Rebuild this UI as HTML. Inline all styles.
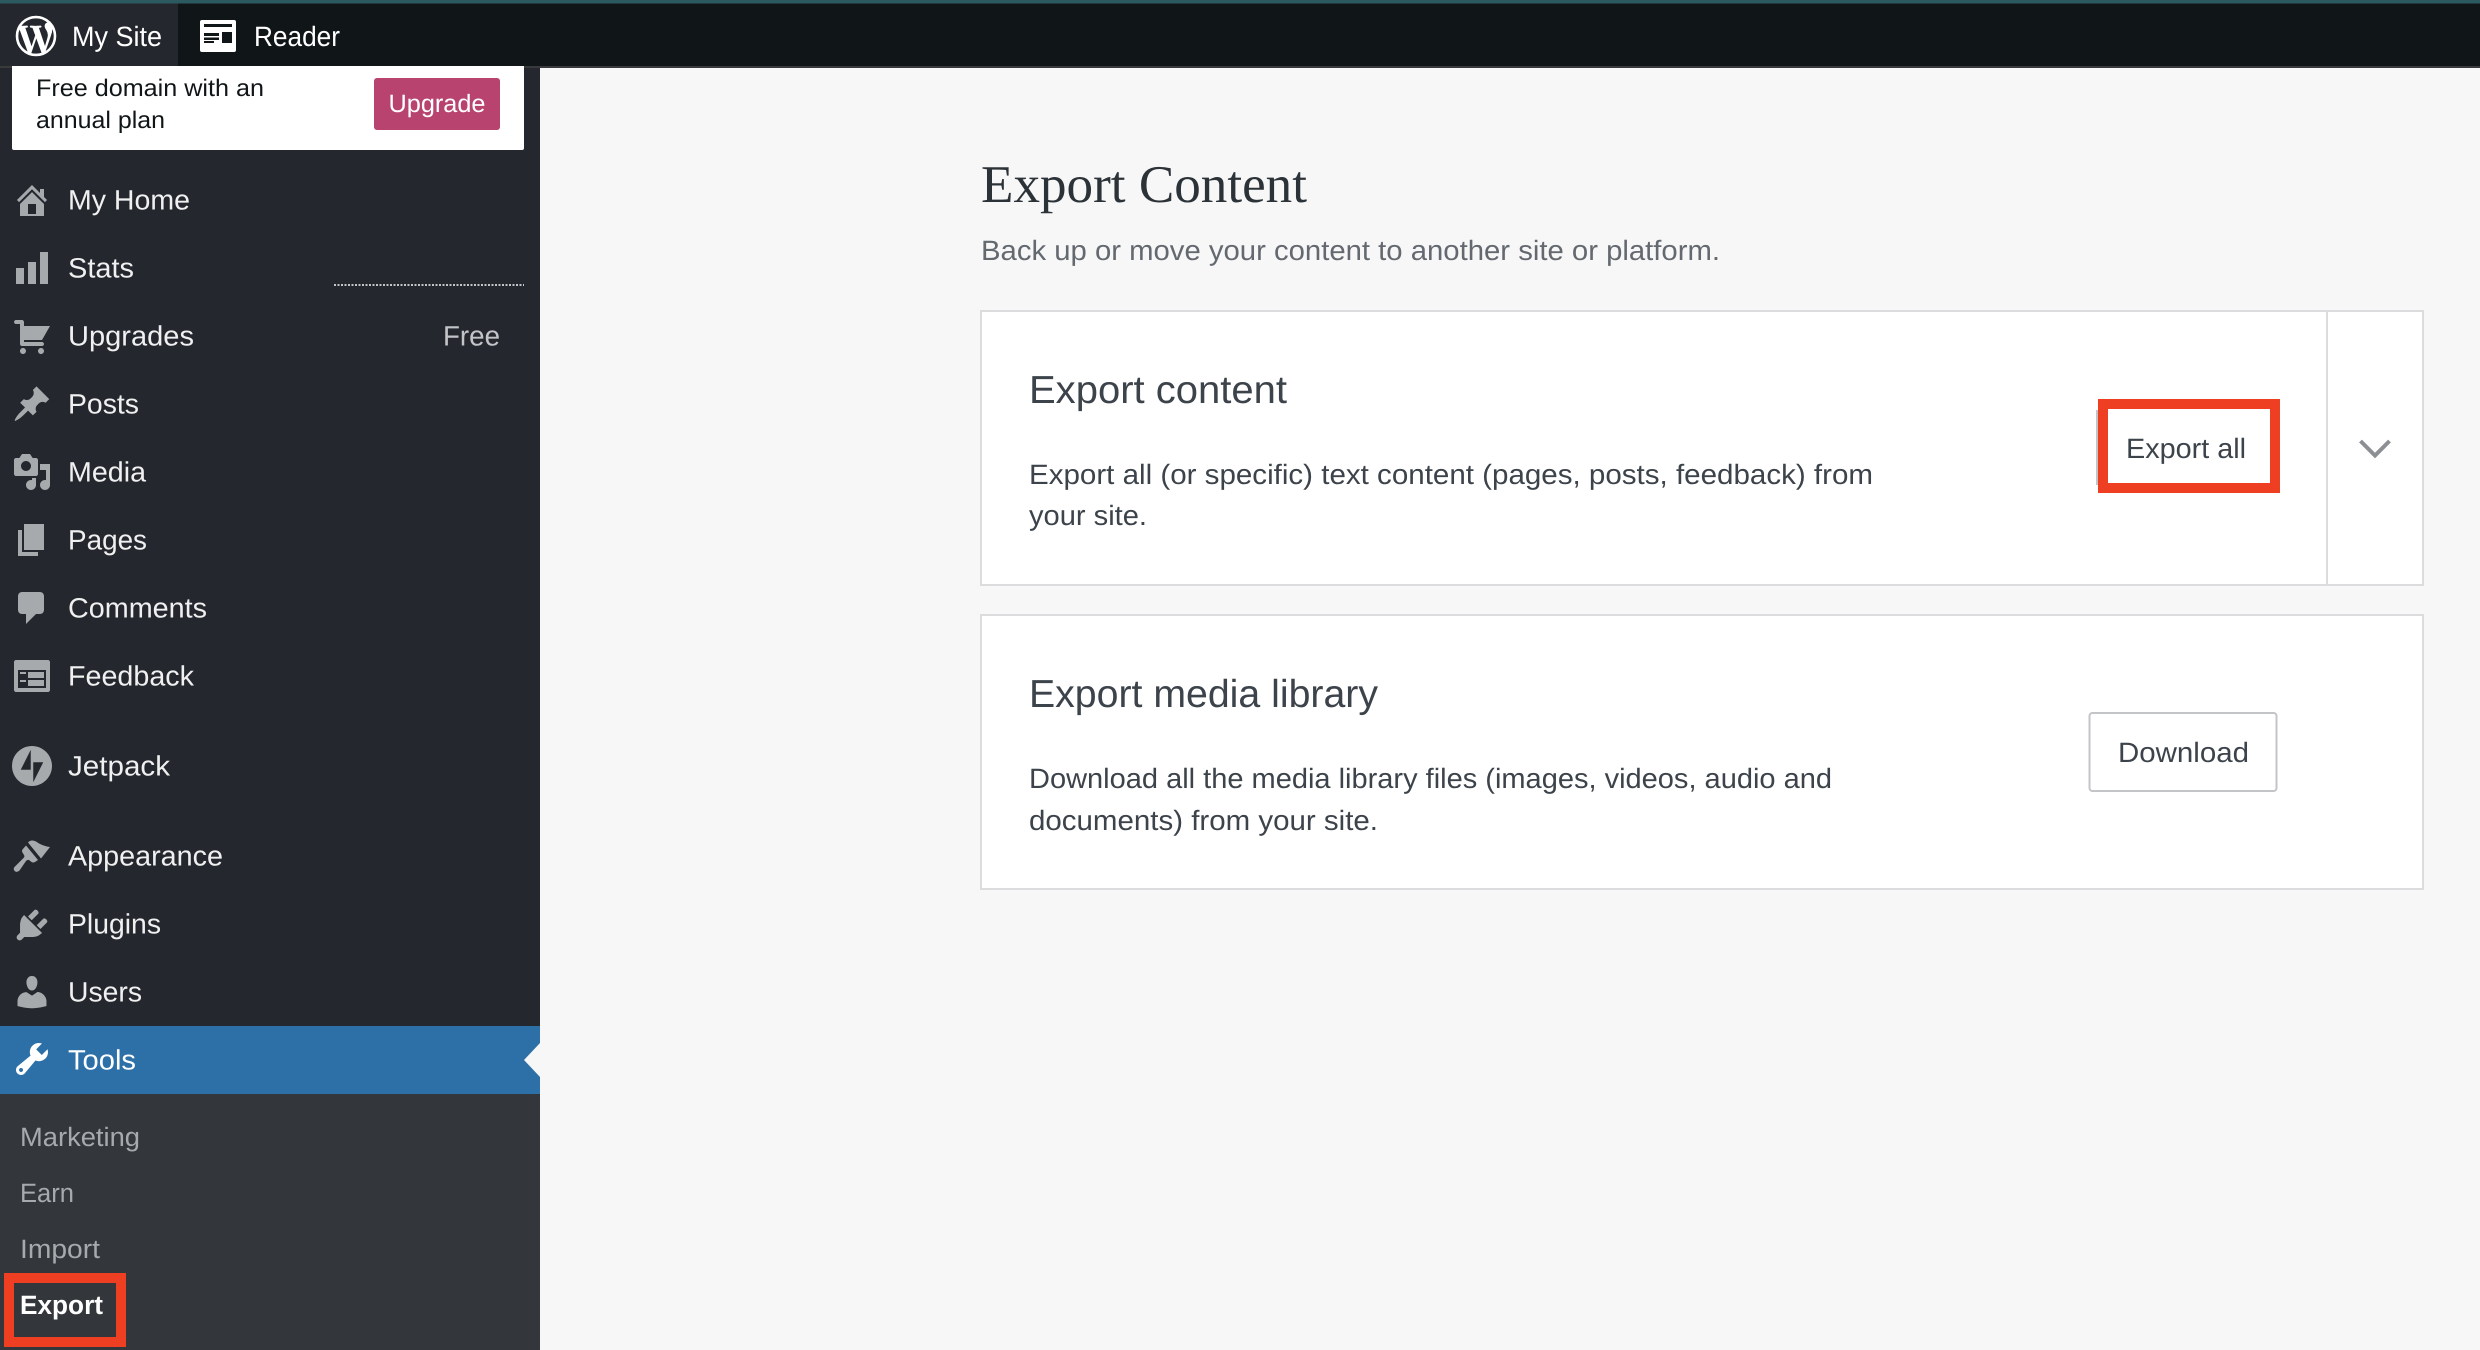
<!DOCTYPE html>
<html><head><meta charset="utf-8"><title>Export Content</title>
<style>
html,body{margin:0;padding:0;background:#f7f7f7;width:2480px;height:1350px;overflow:hidden}
svg{display:block}
text{font-family:"Liberation Sans",sans-serif;text-rendering:geometricPrecision}
.m{font-size:28px;fill:#f0f0f1}
.s{font-size:26.5px;fill:#a7aaad}
.c{font-size:28px;fill:#3c434a}
.t{font-size:39px;fill:#3c434a}
.i{fill:#a7aaad}
</style></head><body>
<svg xmlns="http://www.w3.org/2000/svg" width="2480" height="1350" viewBox="0 0 2480 1350">
<rect width="2480" height="1350" fill="#f7f7f7"/>
<!-- top bar -->
<rect width="2480" height="66" fill="#101517"/>
<rect width="2480" height="3.500" fill="#2b5a60"/>
<rect y="66" width="2480" height="2" fill="#3a3a3c"/>
<rect y="3.500" width="178" height="62.500" fill="#24272d"/>
<g transform="translate(12 12) scale(2)"><path fill="#fff" stroke="#fff" stroke-width=".3" d="M12 2C6.486 2 2 6.486 2 12s4.486 10 10 10 10-4.486 10-10S17.514 2 12 2zM3.01 12c0-1.304.28-2.54.78-3.66l4.29 11.75C5.08 18.63 3.01 15.56 3.01 12zm8.99 8.99c-.88 0-1.73-.13-2.54-.37l2.7-7.84 2.76 7.57c.02.04.04.09.06.12-.93.33-1.93.51-2.98.51zm1.24-13.21c.54-.03 1.03-.09 1.03-.09.48-.06.43-.77-.06-.74 0 0-1.46.11-2.4.11-.88 0-2.37-.11-2.37-.11-.49-.03-.54.71-.05.74 0 0 .46.06.95.09l1.41 3.87-1.98 5.94L6.47 7.78c.54-.03 1.03-.09 1.03-.09.49-.06.43-.77-.06-.74 0 0-1.46.11-2.4.11-.17 0-.37 0-.58-.01C6.07 4.62 8.85 3.01 12 3.01c2.35 0 4.48.9 6.09 2.37-.04 0-.08-.01-.12-.01-.88 0-1.51.77-1.51 1.6 0 .74.43 1.37.88 2.11.34.6.74 1.37.74 2.48 0 .77-.3 1.66-.68 2.91l-.9 3-3.26-9.69zm3.3 12.04l2.75-7.94c.51-1.28.68-2.31.68-3.22 0-.33-.02-.64-.06-.92.7 1.28 1.1 2.76 1.1 4.33 0 3.31-1.8 6.21-4.47 7.75z"/></g>
<text x="72" y="46" class="m" style="fill:#fff" textLength="90" lengthAdjust="spacingAndGlyphs">My Site</text>
<rect x="200" y="20" width="36" height="32" rx="2" fill="#fff"/>
<g fill="#101517"><rect x="204" y="24" width="28" height="3"/><rect x="204" y="33" width="15" height="3"/><rect x="204" y="37.500" width="15" height="2.500"/><rect x="204" y="41" width="10" height="2"/><rect x="222" y="32" width="10" height="11"/></g>
<text x="254" y="46" class="m" style="fill:#fff" textLength="86" lengthAdjust="spacingAndGlyphs">Reader</text>

<!-- sidebar -->
<rect y="68" width="540" height="1282" fill="#24272d"/>
<rect y="1094" width="540" height="256" fill="#33363b"/>
<rect y="1026" width="540" height="68" fill="#2d70a8"/>
<polygon points="540,1043 524,1060 540,1077" fill="#f7f7f7"/>

<!-- upsell -->
<rect x="12" y="66" width="512" height="84" rx="2" fill="#fff"/>
<rect y="66" x="12" width="512" height="2" fill="#fff"/>
<text x="36" y="96" font-size="24" fill="#101517" textLength="228" lengthAdjust="spacingAndGlyphs">Free domain with an</text>
<text x="36" y="128" font-size="24" fill="#101517" textLength="129" lengthAdjust="spacingAndGlyphs">annual plan</text>
<rect x="374" y="78" width="126" height="52" rx="3" fill="#b9436f"/>
<text x="388.500" y="112" font-size="25" fill="#fff" textLength="97" lengthAdjust="spacingAndGlyphs">Upgrade</text>

<!-- menu icons -->
<g class="i">
<path transform="translate(12 180) scale(2)" d="M16 8.5l1.53 1.53-1.06 1.06L10 4.62l-6.47 6.47-1.06-1.06L10 2.5l4 4v-2h2v4zm-6-2.46l6 5.99V18H4v-5.97zM12 17v-5H8v5h4z"/>
<path transform="translate(12 248) scale(2)" d="M18 18V2h-4v16h4zm-6 0V7H8v11h4zm-6 0v-8H2v8h4z"/>
<path transform="translate(12 316) scale(2)" d="M6 13h9c.55 0 1 .45 1 1s-.45 1-1 1H5c-.55 0-1-.45-1-1V4H2c-.55 0-1-.45-1-1s.45-1 1-1h3c.55 0 1 .45 1 1v2h13l-4 7H6v1zm-.5 3c.83 0 1.5.67 1.5 1.5S6.33 19 5.5 19 4 18.33 4 17.5 4.67 16 5.5 16zm9 0c.83 0 1.5.67 1.5 1.5s-.67 1.5-1.5 1.5-1.5-.67-1.5-1.5.67-1.5 1.5-1.5z"/>
<path transform="translate(12 384) scale(2)" d="M10.44 3.02l1.82-1.82 6.36 6.35-1.83 1.82c-1.05-.68-2.48-.57-3.41.36l-.75.75c-.92.93-1.04 2.35-.35 3.41l-1.83 1.82-2.41-2.41-2.8 2.79c-.42.42-3.38 2.71-3.8 2.29s1.86-3.39 2.28-3.81l2.79-2.79L4.1 9.36l1.83-1.82c1.05.69 2.48.57 3.4-.36l.75-.75c.93-.92 1.05-2.35.36-3.41z"/>
<path transform="translate(12 452) scale(2)" d="M13 11V4c0-.55-.45-1-1-1h-1.67L9 1H5L3.67 3H2c-.55 0-1 .45-1 1v7c0 .55.45 1 1 1h10c.55 0 1-.45 1-1zM7 4.5c1.38 0 2.5 1.12 2.5 2.5S8.38 9.5 7 9.5 4.5 8.38 4.5 7 5.62 4.5 7 4.5zM14 6h5v10.5c0 1.38-1.12 2.5-2.5 2.5S14 17.88 14 16.5s1.12-2.5 2.5-2.5c.17 0 .34.02.5.05V9h-3V6zm-4 8.05V13h2v3.5c0 1.38-1.12 2.5-2.5 2.5S7 17.88 7 16.5 8.12 14 9.5 14c.17 0 .34.02.5.05z"/>
<path transform="translate(12 520) scale(2)" d="M6 15V2h10v13H6zm-1 1h8v2H3V5h2v11z"/>
<path transform="translate(12 588) scale(2)" d="M5 2h9c1.1 0 2 .9 2 2v7c0 1.1-.9 2-2 2h-2l-5 5v-5H5c-1.1 0-2-.9-2-2V4c0-1.1.9-2 2-2z"/>
<path transform="translate(12 656) scale(2)" d="M2 2h16c.55 0 1 .45 1 1v14c0 .55-.45 1-1 1H2c-.55 0-1-.45-1-1V3c0-.55.45-1 1-1zm15 14V7H3v9h14zM4 8v1h3V8H4zm4 0v3h8V8H8zm-4 4v1h3v-1H4zm4 0v3h8v-3H8z"/>
<path transform="translate(12 746) scale(1.25)" d="M16 0C7.2 0 0 7.2 0 16s7.2 16 16 16 16-7.2 16-16S24.8 0 16 0zM15 19H7l8-16v16zm2 10V13h8l-8 16z"/>
<path d="M28 842.500Q31 839 36 841.500Q42 846 50 847L41 858.500Z"/>
<path d="M26 845.500L38 860L35 862Q33 863 31.500 862L29 860Q27.500 859.500 26 861L19.500 870.500Q16 873.500 14 870Q13 868 15.500 866L23.500 858Q25 856.500 24 855L22.500 852.500Q21.500 851 22.500 849.500Z"/>
<path transform="translate(12 905) scale(2)" d="M13.11 4.36L9.87 7.6 8 5.73l3.24-3.24c.35-.34 1.05-.2 1.56.32.52.51.66 1.21.31 1.55zm-8 1.77l.91-1.12 9.01 9.01-1.19.84c-.71.71-2.63 1.16-3.82 1.16H6.14L4.9 17.26c-.59.59-1.54.59-2.12 0-.59-.58-.59-1.53 0-2.12l1.24-1.24v-3.88c0-1.13.4-3.19 1.09-3.89zm7.26 3.97l3.24-3.24c.34-.35 1.04-.21 1.55.31.52.51.66 1.21.31 1.55l-3.24 3.25z"/>
<path transform="translate(12 972) scale(2)" d="M10 9.25c-2.27 0-2.73-3.44-2.73-3.44C7 4.02 7.82 2 9.97 2c2.16 0 2.98 2.02 2.71 3.81 0 0-.41 3.44-2.68 3.44zm0 2.57L12.72 10c2.39 0 4.52 2.33 4.52 4.53v2.49s-3.65 1.13-7.24 1.13c-3.65 0-7.24-1.13-7.24-1.13v-2.49c0-2.25 1.94-4.48 4.47-4.48z"/>
</g>
<path transform="translate(12 1039) scale(2)" fill="#fff" d="M16.68 9.77c-1.34 1.34-3.3 1.67-4.95.99l-5.41 6.52c-.99.99-2.59.99-3.58 0s-.99-2.59 0-3.57l6.52-5.42c-.68-1.65-.35-3.61.99-4.95 1.28-1.28 3.12-1.62 4.72-1.06l-2.89 2.89 2.82 2.82 2.86-2.87c.53 1.58.18 3.39-1.08 4.67zM3.81 16.21c.4.39 1.04.39 1.43 0 .4-.4.4-1.04 0-1.43-.39-.4-1.03-.4-1.43 0-.39.39-.39 1.03 0 1.43z"/>

<!-- menu text -->
<text x="68" y="209.500" class="m" textLength="122" lengthAdjust="spacingAndGlyphs">My Home</text>
<text x="68" y="277.500" class="m" textLength="66" lengthAdjust="spacingAndGlyphs">Stats</text>
<line x1="334" y1="285" x2="524" y2="285" stroke="#c3c4c7" stroke-width="2" stroke-dasharray="2 1.500"/>
<text x="68" y="345.500" class="m" textLength="126" lengthAdjust="spacingAndGlyphs">Upgrades</text>
<text x="443" y="345.500" class="m" style="fill:#c3c4c7" textLength="57" lengthAdjust="spacingAndGlyphs">Free</text>
<text x="68" y="413.500" class="m" textLength="71" lengthAdjust="spacingAndGlyphs">Posts</text>
<text x="68" y="481.500" class="m" textLength="78" lengthAdjust="spacingAndGlyphs">Media</text>
<text x="68" y="549.500" class="m" textLength="79" lengthAdjust="spacingAndGlyphs">Pages</text>
<text x="68" y="617.500" class="m" textLength="139" lengthAdjust="spacingAndGlyphs">Comments</text>
<text x="68" y="685.500" class="m" textLength="126" lengthAdjust="spacingAndGlyphs">Feedback</text>
<text x="68" y="775.500" class="m" textLength="102" lengthAdjust="spacingAndGlyphs">Jetpack</text>
<text x="68" y="865.500" class="m" textLength="155" lengthAdjust="spacingAndGlyphs">Appearance</text>
<text x="68" y="933.500" class="m" textLength="93" lengthAdjust="spacingAndGlyphs">Plugins</text>
<text x="68" y="1001.500" class="m" textLength="74" lengthAdjust="spacingAndGlyphs">Users</text>
<text x="68" y="1069.500" class="m" style="fill:#fff" textLength="68" lengthAdjust="spacingAndGlyphs">Tools</text>
<text x="20" y="1146" class="s" textLength="120" lengthAdjust="spacingAndGlyphs">Marketing</text>
<text x="20" y="1202" class="s" textLength="54" lengthAdjust="spacingAndGlyphs">Earn</text>
<text x="20" y="1258" class="s" textLength="80" lengthAdjust="spacingAndGlyphs">Import</text>
<text x="20" y="1314" class="s" style="fill:#fff;font-weight:700" textLength="83" lengthAdjust="spacingAndGlyphs">Export</text>
<rect x="9" y="1278" width="112" height="64" fill="none" stroke="#ee3f23" stroke-width="10"/>

<!-- content header -->
<text x="981" y="202" font-size="53" fill="#2c3338" style="font-family:'Liberation Serif',serif" textLength="326" lengthAdjust="spacingAndGlyphs">Export Content</text>
<text x="981" y="260" font-size="28" fill="#646970" textLength="739" lengthAdjust="spacingAndGlyphs">Back up or move your content to another site or platform.</text>

<!-- card 1 -->
<rect x="981" y="311" width="1442" height="274" fill="#fff" stroke="#dcdcde" stroke-width="2"/>
<line x1="2327" y1="311" x2="2327" y2="585" stroke="#dcdcde" stroke-width="2"/>
<text x="1029" y="403" class="t" textLength="258" lengthAdjust="spacingAndGlyphs">Export content</text>
<text x="1029" y="484" class="c" textLength="844" lengthAdjust="spacingAndGlyphs">Export all (or specific) text content (pages, posts, feedback) from</text>
<text x="1029" y="525" class="c" textLength="118" lengthAdjust="spacingAndGlyphs">your site.</text>
<rect x="2096" y="410" width="3" height="75" fill="#c3c4c7"/>
<rect x="2103" y="404" width="172" height="84" fill="#fff" stroke="#ee3f23" stroke-width="10"/>
<text x="2126" y="458" class="c" textLength="120" lengthAdjust="spacingAndGlyphs">Export all</text>
<path d="M2360.500 441L2375 455.500l14.500-14.500" fill="none" stroke="#8c8f94" stroke-width="4"/>

<!-- card 2 -->
<rect x="981" y="615" width="1442" height="274" fill="#fff" stroke="#dcdcde" stroke-width="2"/>
<text x="1029" y="707" class="t" textLength="349" lengthAdjust="spacingAndGlyphs">Export media library</text>
<text x="1029" y="788" class="c" textLength="803" lengthAdjust="spacingAndGlyphs">Download all the media library files (images, videos, audio and</text>
<text x="1029" y="830" class="c" textLength="349" lengthAdjust="spacingAndGlyphs">documents) from your site.</text>
<rect x="2089.500" y="713" width="187" height="78" rx="3" fill="#fff" stroke="#c3c4c7" stroke-width="2"/>
<text x="2118" y="762" class="c" textLength="131" lengthAdjust="spacingAndGlyphs">Download</text>
</svg>
</body></html>
